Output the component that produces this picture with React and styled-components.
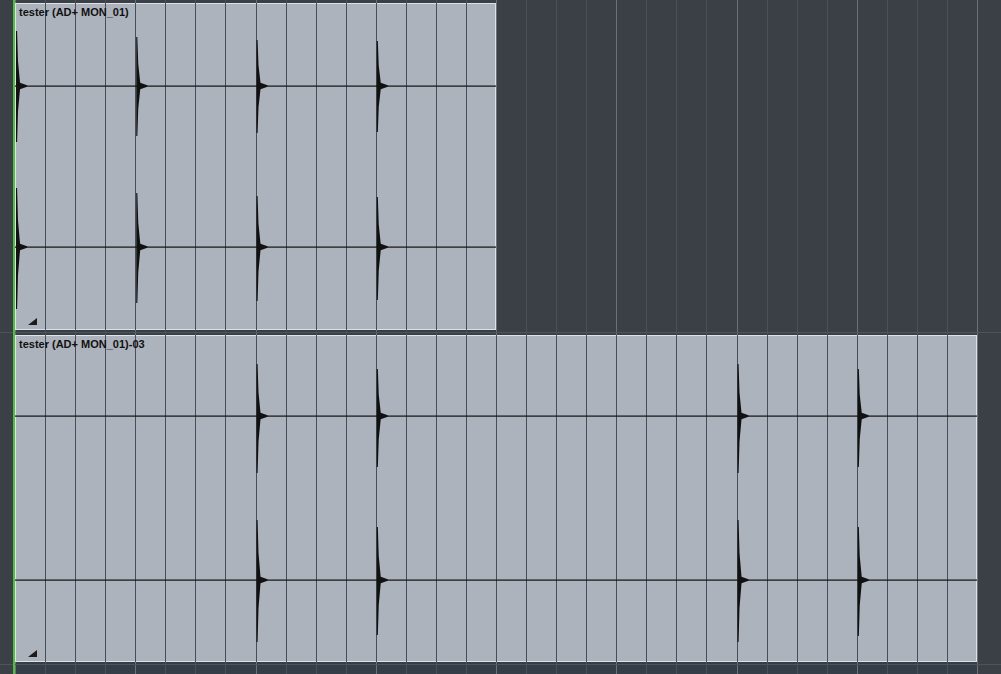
import React from "react";
import styled, { createGlobalStyle } from "styled-components";

const BEAT = 30.0625;
const COLS = 33;

const GlobalStyle = createGlobalStyle`
  html, body {
    margin: 0;
    padding: 0;
    background: #3b4046;
    overflow: hidden;
  }
`;

const StArranger = styled.div`
  position: relative;
  width: 1001px;
  height: 674px;
  overflow: hidden;
  background: #3b4046;
  display: flex;
  flex-direction: column;
`;

const StLane = styled.div`
  display: grid;
  grid-template-columns: 15px repeat(${COLS}, ${BEAT}px);
  grid-template-rows: ${(props) => props.$rows};
  border-bottom: ${(props) => (props.$last ? "none" : "1px solid #4e5459")};
  flex: ${(props) => (props.$last ? "1" : "none")};
`;

const StGridLine = styled.div`
  grid-row: 1 / -1;
  grid-column: ${(props) => props.$col};
  border-left: 1px solid ${(props) => (props.$bar ? "#6c7177" : "#4a5056")};
`;

const StUnderStrip = styled.div`
  grid-row: ${(props) => props.$row};
  grid-column: 2 / span ${(props) => props.$beats};
  background: #343e49;
`;

const StClip = styled.div`
  grid-row: 2;
  grid-column: 2 / span ${(props) => props.$beats};
  display: grid;
  grid-template-columns: repeat(${(props) => props.$beats}, 1fr);
  grid-template-rows: 1fr;
  background: #adb3bd;
  box-shadow: inset 0 0 0 1px #dde1e8;
  overflow: hidden;
`;

const StClipBeat = styled.div`
  grid-row: 1;
  grid-column: ${(props) => props.$col};
  border-left: 1px solid #474d59;
`;

const StWave = styled.svg`
  grid-row: 1;
  grid-column: 1 / -1;
  width: 100%;
  height: 100%;
  display: block;
`;

const StClipTitle = styled.div`
  grid-row: 1;
  grid-column: 1 / -1;
  align-self: start;
  padding: 3px 0 0 4px;
  font-family: "Liberation Sans", Arial, sans-serif;
  font-weight: bold;
  font-size: 11px;
  line-height: 13px;
  color: #111;
  white-space: nowrap;
`;

const StResizeHandle = styled.div`
  grid-row: 1;
  grid-column: 1 / -1;
  align-self: end;
  justify-self: start;
  width: 0;
  height: 0;
  margin: 0 0 5px 13px;
  border-left: 9px solid transparent;
  border-bottom: 7px solid #1c1c1c;
`;

const StCursor = styled.div`
  position: absolute;
  top: 0;
  bottom: 0;
  left: 13px;
  width: 2px;
  background: #4fc13a;
`;

const clips = [
  {
    id: 1,
    title: "tester (AD+ MON_01)",
    beats: 16,
    rows: "3px 327px 2px",
    centers: [83, 244],
    hits: [
      { k: 0, ch: [[55, 56], [59, 62]] },
      { k: 4, ch: [[49, 50], [54, 56]] },
      { k: 8, ch: [[46, 47], [51, 54]] },
      { k: 12, ch: [[45, 46], [50, 53]] },
    ],
  },
  {
    id: 2,
    title: "tester (AD+ MON_01)-03",
    beats: 32,
    rows: "2px 327px 2px",
    centers: [81, 245],
    hits: [
      { k: 8, ch: [[52, 57], [60, 62]] },
      { k: 12, ch: [[47, 51], [53, 55]] },
      { k: 24, ch: [[52, 57], [60, 62]] },
      { k: 28, ch: [[47, 51], [53, 56]] },
    ],
  },
];

function transientPath(x, c, up, down) {
  return [
    `M${x},${c - up}`,
    `L${x + 1.1},${c - up}`,
    `L${x + 2},${c - up * 0.45}`,
    `L${x + 4},${c - 3.2}`,
    `L${x + 11},${c - 0.7}`,
    `L${x + 11},${c + 0.7}`,
    `L${x + 4},${c + 3.2}`,
    `L${x + 2},${c + down * 0.45}`,
    `L${x + 1.1},${c + down}`,
    `L${x},${c + down}`,
    "Z",
  ].join(" ");
}

function Waveform({ clip }) {
  const width = clip.beats * BEAT;
  return (
    <StWave viewBox={`0 0 ${width} 327`} preserveAspectRatio="none">
      {clip.centers.map((c) => (
        <rect key={c} x="0" y={c - 0.5} width={width} height="1.2" fill="#111" />
      ))}
      {clip.hits.map((hit) =>
        hit.ch.map(([up, down], i) => (
          <path
            key={`${hit.k}-${i}`}
            d={transientPath(hit.k * BEAT + 1, clip.centers[i], up, down)}
            fill="#111"
          />
        ))
      )}
    </StWave>
  );
}

function GridLines() {
  return Array.from({ length: COLS }, (_, k) => (
    <StGridLine key={k} $col={k + 2} $bar={k % 4 === 0} />
  ));
}

function Clip({ clip }) {
  return (
    <StClip $beats={clip.beats}>
      {Array.from({ length: clip.beats - 1 }, (_, i) => (
        <StClipBeat key={i} $col={i + 2} />
      ))}
      <Waveform clip={clip} />
      <StClipTitle>{clip.title}</StClipTitle>
      <StResizeHandle />
    </StClip>
  );
}

function App() {
  return (
    <>
      <GlobalStyle />
      <StArranger>
        {clips.map((clip) => (
          <StLane key={clip.id} $rows={clip.rows}>
            <StUnderStrip $row={3} $beats={clip.beats} />
            <GridLines />
            <Clip clip={clip} />
          </StLane>
        ))}
        <StLane $rows="1fr" $last>
          <StUnderStrip $row={1} $beats={32} />
          <GridLines />
        </StLane>
        <StCursor />
      </StArranger>
    </>
  );
}

export default App;
